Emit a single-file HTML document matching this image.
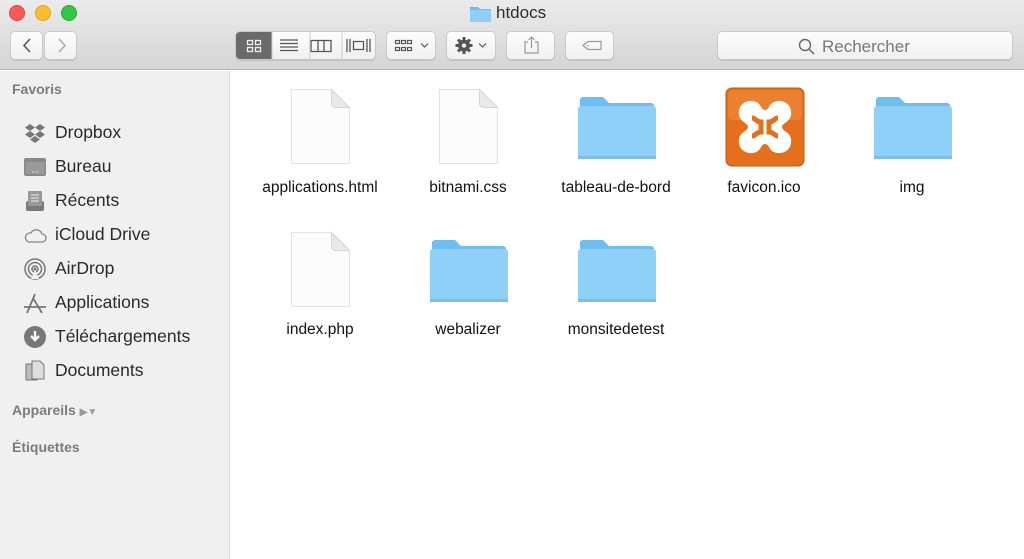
<!DOCTYPE html>
<html><head><meta charset="utf-8"><style>
*{margin:0;padding:0;box-sizing:border-box}
body{width:1024px;height:559px;overflow:hidden;font-family:"Liberation Sans",sans-serif;background:#fff;position:relative}
.tb{position:absolute;left:0;top:0;width:1024px;height:70px;background:linear-gradient(#ebebeb,#d5d5d5);border-bottom:1px solid #b8b8b8}
.dot{position:absolute;top:5px;width:16px;height:16px;border-radius:50%}
.btn{position:absolute;top:31px;height:29px;background:linear-gradient(#fdfdfd,#f0f0f0);border:1px solid #c9c9c9;border-radius:5px;box-shadow:0 1px 0 #c0c0c0}
.side{position:absolute;left:0;top:71px;width:230px;height:488px;background:#f0f0f0;border-right:1px solid #d8d8d8}
.h{position:absolute;left:12px;font-size:14px;font-weight:bold;color:#7c7c7c}
.it{position:absolute;left:55px;font-size:17.5px;color:#2a2a2a}
.ic{position:absolute;left:23px;width:24px;height:24px}
.lab{position:absolute;width:150px;text-align:center;font-size:15.5px;color:#111}
.doc{position:absolute;width:61px;height:77px}
.fold{position:absolute;width:78px;height:63px}
</style></head><body>
<div class="tb">
<div class="dot" style="left:9px;background:#fc5b57;border:1px solid #e0443e"></div>
<div class="dot" style="left:35px;background:#fdbc2e;border:1px solid #dea123"></div>
<div class="dot" style="left:61px;background:#33c748;border:1px solid #27aa35"></div>
<svg style="position:absolute;left:470px;top:5px" width="21" height="17"><path d="M0 2h8l2 2h11v13H0z" fill="#6cbdf0"/><rect x="0" y="5" width="21" height="12" fill="#8dcff7"/></svg>
<div style="position:absolute;left:496px;top:3px;font-size:17px;color:#2c2c2c">htdocs</div>
<div class="btn" style="left:10px;width:33px"><svg width="33" height="27"><path d="M19 7l-6 6.5 6 6.5" stroke="#555" stroke-width="1.6" fill="none"/></svg></div>
<div class="btn" style="left:44px;width:33px"><svg width="33" height="27"><path d="M14 7l6 6.5-6 6.5" stroke="#aaa" stroke-width="1.6" fill="none"/></svg></div>
<div class="btn" style="left:235px;width:141px;overflow:hidden">
<div style="position:absolute;left:0;top:0;width:36px;height:29px;background:#6a6a6a"></div>
<svg style="position:absolute;left:0;top:0" width="141" height="27">
<g fill="none" stroke="#eee" stroke-width="1.3"><rect x="11.5" y="8.5" width="5" height="4"/><rect x="19.5" y="8.5" width="5" height="4"/><rect x="11.5" y="15.5" width="5" height="4"/><rect x="19.5" y="15.5" width="5" height="4"/></g>
<g stroke="#555" stroke-width="1.3"><path d="M44 8h18M44 11.5h18M44 15h18M44 18.5h18"/><path d="M75 8.5h20v11H75zM82 8.5v11M88 8.5v11" fill="none"/><path d="M111 7v13M114 7v13M131 7v13M134 7v13M117.5 9.5h10v8h-10z" fill="none"/></g>
<path d="M36 0v29M74 0v29M106 0v29" stroke="#ccc"/></svg></div>
<div class="btn" style="left:386px;width:50px"><svg width="50" height="27"><g fill="none" stroke="#555" stroke-width="1.2"><rect x="8.5" y="8.5" width="4" height="3"/><rect x="14.5" y="8.5" width="4" height="3"/><rect x="20.5" y="8.5" width="4" height="3"/><rect x="8.5" y="15.5" width="4" height="3"/><rect x="14.5" y="15.5" width="4" height="3"/><rect x="20.5" y="15.5" width="4" height="3"/><path d="M34 11.5l3.5 3.5 3.5-3.5"/></g></svg></div>
<div class="btn" style="left:446px;width:50px"><svg width="50" height="27"><circle cx="17" cy="13.5" r="6" fill="#555"/><g stroke="#555" stroke-width="3"><path d="M17 5v17M8.5 13.5h17M11 7.5l12 12M23 7.5l-12 12"/></g><circle cx="17" cy="13.5" r="2.2" fill="#f5f5f5"/><path d="M32 11.5l3.5 3.5 3.5-3.5" fill="none" stroke="#555" stroke-width="1.2"/></svg></div>
<div class="btn" style="left:506px;width:49px"><svg width="49" height="27"><path d="M21 10h-3v11h13V10h-3M24.5 16V5M21.5 8l3-3 3 3" fill="none" stroke="#999" stroke-width="1.2"/></svg></div>
<div class="btn" style="left:565px;width:49px"><svg width="49" height="27"><path d="M17 13.5l5-4h13v8H22z" fill="none" stroke="#999" stroke-width="1.2"/><circle cx="22" cy="13.5" r="0.8" fill="#999"/></svg></div>
<div class="btn" style="left:717px;width:296px"><svg style="position:absolute;left:80px;top:6px" width="18" height="18"><circle cx="7" cy="7" r="5.5" fill="none" stroke="#666" stroke-width="1.4"/><path d="M11 11l5 5" stroke="#666" stroke-width="1.5"/></svg><span style="position:absolute;left:104px;top:5px;font-size:17px;color:#777">Rechercher</span></div>
</div>
<div class="side">
<div class="h" style="top:10px">Favoris</div>
<svg class="ic" style="top:50px" viewBox="0 0 24 24"><path d="M7 3l5 3.5-5 3.5-5-3.5zM17 3l5 3.5-5 3.5-5-3.5zM7 10l5 3.5-5 3.5-5-3.5zM17 10l5 3.5-5 3.5-5-3.5zM12 15l5 3.5-5 3.5-5-3.5z" fill="#777"/></svg>
<div class="it" style="top:51px">Dropbox</div>
<svg class="ic" style="top:84px" viewBox="0 0 24 24"><rect x="1" y="3" width="22" height="18" rx="2" fill="#888"/><rect x="2.5" y="7" width="19" height="12" fill="#9a9a9a"/><path d="M9 17h1M11.5 17h1M14 17h1" stroke="#eee"/></svg>
<div class="it" style="top:85px">Bureau</div>
<svg class="ic" style="top:118px" viewBox="0 0 24 24"><rect x="3" y="12" width="18" height="10" rx="2" fill="#7a7a7a"/><rect x="5" y="2" width="14" height="15" rx="1" fill="#999"/><path d="M8 6h8M8 9h8M8 12h8" stroke="#eee"/></svg>
<div class="it" style="top:119px">Récents</div>
<svg class="ic" style="top:152px" viewBox="0 0 24 24"><path d="M6 19h13a4 4 0 0 0 0-8 6 6 0 0 0-11-1 4.5 4.5 0 0 0-2 9z" fill="none" stroke="#888" stroke-width="1.3"/></svg>
<div class="it" style="top:153px">iCloud Drive</div>
<svg class="ic" style="top:186px" viewBox="0 0 24 24"><g fill="none" stroke="#777" stroke-width="1.5"><circle cx="12" cy="12" r="10"/><circle cx="12" cy="12" r="6.5"/><circle cx="12" cy="12" r="3"/></g><path d="M12 12l-4 10h8z" fill="#f0f0f0"/><circle cx="12" cy="12" r="1.5" fill="#777"/></svg>
<div class="it" style="top:187px">AirDrop</div>
<svg class="ic" style="top:220px" viewBox="0 0 24 24"><path d="M12 3L4 22M10 7l9 15M1 16h22" stroke="#777" stroke-width="1.8" fill="none"/></svg>
<div class="it" style="top:221px">Applications</div>
<svg class="ic" style="top:254px" viewBox="0 0 24 24"><circle cx="12" cy="12" r="11" fill="#777"/><path d="M12 6v7M8 11l4 4 4-4" stroke="#fff" stroke-width="2.4" fill="none"/></svg>
<div class="it" style="top:255px">Téléchargements</div>
<svg class="ic" style="top:288px" viewBox="0 0 24 24"><path d="M3 5h8l3 3v13H3z" fill="#bbb" stroke="#777"/><path d="M9 2h8l4 4v14H9z" fill="#ddd" stroke="#777"/></svg>
<div class="it" style="top:289px">Documents</div>
<div class="h" style="top:331px">Appareils <span style="font-size:10px;color:#999">▶▼</span></div>
<div class="h" style="top:368px">Étiquettes</div>
</div>
<svg width="0" height="0" style="position:absolute"><defs>
<symbol id="d" viewBox="0 0 61 77"><path d="M1.5 1.5h40l18 18v56h-58z" fill="#fcfcfc" stroke="#e2e2e2"/><path d="M41.5 1.5v14a4 4 0 0 0 4 4h14z" fill="#e9e9e9" stroke="#d6d6d6"/></symbol>
<symbol id="f" viewBox="0 0 78 63"><path d="M2 4a3 3 0 0 1 3-3h20l6 6h42a3 3 0 0 1 3 3v50H2z" fill="#6ebef0"/><rect x="0" y="10" width="78" height="53" rx="3" fill="#8fd0f8"/><rect x="0" y="60" width="78" height="3" fill="#7dbde6"/></symbol>
</defs></svg>
<svg class="doc" style="left:290px;top:88px"><use href="#d"/></svg>
<svg class="doc" style="left:438px;top:88px"><use href="#d"/></svg>
<svg class="fold" style="left:578px;top:96px"><use href="#f"/></svg>
<svg style="position:absolute;left:725px;top:87px" width="80" height="80"><rect x="1" y="1" width="78" height="78" rx="6" fill="#e4701e" stroke="#c25710"/><rect x="3" y="3" width="74" height="30" rx="5" fill="#f08a3c" opacity=".6"/><path d="M14 28c-2-16 18-18 22-8 2 4 6 4 8 0 4-10 24-8 22 8-1 7-9 8-9 12s8 5 9 12c2 16-18 18-22 8-2-4-6-4-8 0-4 10-24 8-22-8 1-7 9-8 9-12s-8-5-9-12z" fill="#fff"/><path d="M27 31c4 0 4 4 9 4v10c-5 0-5 4-9 4" fill="none" stroke="#e4701e" stroke-width="5"/><path d="M53 31c-4 0-4 4-9 4v10c5 0 5 4 9 4" fill="none" stroke="#e4701e" stroke-width="5"/></svg>
<svg class="fold" style="left:874px;top:96px"><use href="#f"/></svg>
<div class="lab" style="left:245px;top:179px">applications.html</div>
<div class="lab" style="left:393px;top:179px">bitnami.css</div>
<div class="lab" style="left:541px;top:179px">tableau-de-bord</div>
<div class="lab" style="left:689px;top:179px">favicon.ico</div>
<div class="lab" style="left:837px;top:179px">img</div>
<svg class="doc" style="left:290px;top:231px"><use href="#d"/></svg>
<svg class="fold" style="left:430px;top:239px"><use href="#f"/></svg>
<svg class="fold" style="left:578px;top:239px"><use href="#f"/></svg>
<div class="lab" style="left:245px;top:321px">index.php</div>
<div class="lab" style="left:393px;top:321px">webalizer</div>
<div class="lab" style="left:541px;top:321px">monsitedetest</div>
</body></html>
